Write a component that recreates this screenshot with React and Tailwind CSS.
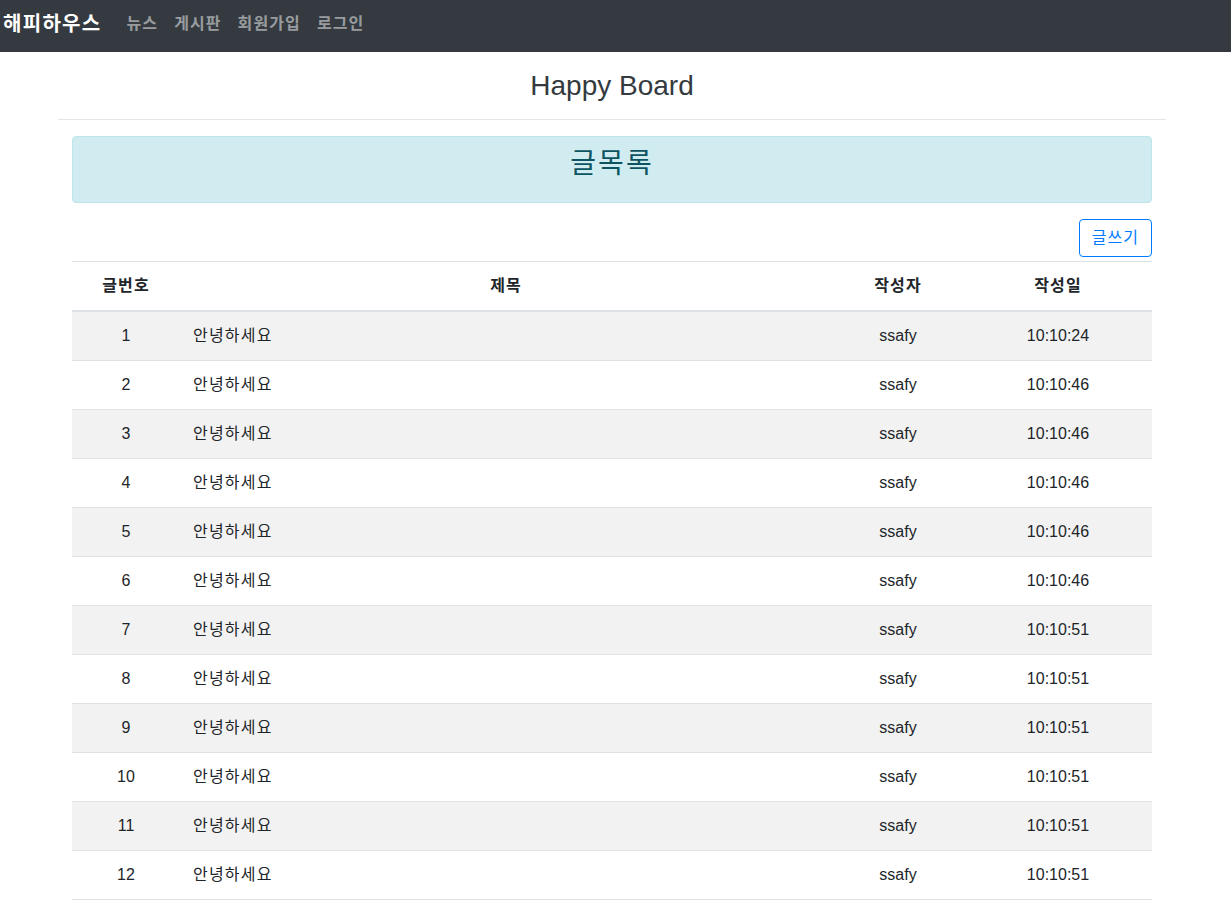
import React from "react";

const times = ["10:10:24","10:10:46","10:10:46","10:10:46","10:10:46","10:10:46","10:10:51","10:10:51","10:10:51","10:10:51","10:10:51","10:10:51"];

export default function App() {
  const font = { fontFamily: '"Liberation Sans", "Noto Sans CJK KR", sans-serif' };
  return (
    <div className="w-[1231px] min-h-[901px] bg-white text-[#212529]" style={font}>
      <nav className="h-[52px] bg-[#343a40] flex items-start pt-[10px] pl-[3px]">
        <span className="text-white font-bold text-[20px] leading-[28px] tracking-[1.3px] mr-[17px]">해피하우스</span>
        <div className="flex text-[16px] font-bold leading-[28px] tracking-[1.1px] text-[#999c9f]">
          <span className="px-2">뉴스</span>
          <span className="px-2">게시판</span>
          <span className="px-2">회원가입</span>
          <span className="px-2">로그인</span>
        </div>
      </nav>
      <div className="w-[1108px] ml-[58px]">
        <h2 className="text-center text-[28px] leading-[34px] text-[#343a40] pt-[17px] pb-[16px] border-b border-[#e5e5e5]">Happy Board</h2>
      </div>
      <div className="w-[1080px] ml-[72px] pt-[16px]">
        <div className="h-[67px] bg-[#d1ecf1] border border-[#bee5eb] rounded-[4px] text-[#0c5460] text-[28px] leading-[34px] tracking-[2px] text-center pt-[10px]">글목록</div>
        <div className="flex justify-end mt-[16px] mb-[4px]">
          <button className="h-[38px] px-[12px] border border-[#007bff] rounded-[4px] text-[#007bff] text-[16px] leading-[24px] tracking-[1px]">글쓰기</button>
        </div>
        <table className="w-full border-collapse text-[16px] leading-[24px]">
          <thead>
            <tr className="font-bold tracking-[1.1px]">
              <th className="w-[108px] py-[12px] border-t border-b-2 border-[#dee2e6] text-center">글번호</th>
              <th className="w-[652px] py-[12px] border-t border-b-2 border-[#dee2e6] text-center">제목</th>
              <th className="w-[132px] py-[12px] border-t border-b-2 border-[#dee2e6] text-center">작성자</th>
              <th className="w-[188px] py-[12px] border-t border-b-2 border-[#dee2e6] text-center">작성일</th>
            </tr>
          </thead>
          <tbody>
            {times.map((t, i) => (
              <tr key={i} className={i % 2 === 0 ? "bg-[#f2f2f2]" : "bg-white"}>
                <td className="py-[12px] border-b border-[#dee2e6] text-center">{i + 1}</td>
                <td className="py-[12px] px-[13px] border-b border-[#dee2e6] text-left tracking-[1.2px]">안녕하세요</td>
                <td className="py-[12px] border-b border-[#dee2e6] text-center">ssafy</td>
                <td className="py-[12px] border-b border-[#dee2e6] text-center">{t}</td>
              </tr>
            ))}
          </tbody>
        </table>
      </div>
    </div>
  );
}
